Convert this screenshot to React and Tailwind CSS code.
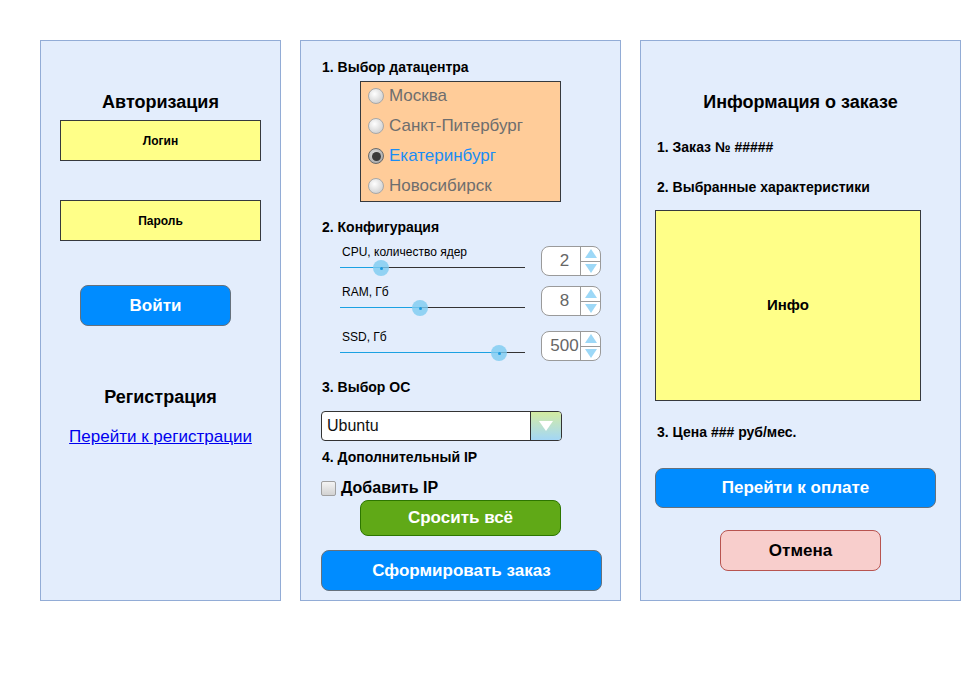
import React from "react";

function Slider({ pos }) {
  return (
    <div className="relative h-[16px] w-[185px]">
      <div className="absolute left-0 right-0 top-[7px] h-px bg-[#333333]" />
      <div className="absolute left-0 top-[7px] h-px bg-[#1ba1e2]" style={{ width: pos }} />
      <div
        className="absolute top-0 flex h-4 w-4 items-center justify-center rounded-full bg-[#7ccbf0]/80"
        style={{ left: pos - 8 }}
      >
        <div className="h-[3px] w-[3px] rounded-full bg-[#1b9ae0]" />
      </div>
    </div>
  );
}

function Spinner({ value }) {
  return (
    <div className="flex h-[30px] w-[60px] overflow-hidden rounded-[8px] border border-[#9a9a9a] bg-white">
      <div className="flex flex-1 items-center justify-center pl-[7px] text-[17px] text-[#666666]">{value}</div>
      <div className="flex w-[20px] flex-col border-l border-[#9a9a9a]">
        <div className="flex flex-1 items-center justify-center border-b border-[#9a9a9a]">
          <svg width="12" height="9" viewBox="0 0 12 9">
            <polygon points="6,0 12,9 0,9" fill="#9dd8f7" />
          </svg>
        </div>
        <div className="flex flex-1 items-center justify-center">
          <svg width="12" height="9" viewBox="0 0 12 9">
            <polygon points="0,0 12,0 6,9" fill="#9dd8f7" />
          </svg>
        </div>
      </div>
    </div>
  );
}

function ConfigRow({ label, pos, value, className }) {
  return (
    <div className={"flex " + className}>
      <div className="ml-[19px] flex w-[185px] flex-col">
        <div className="h-[12px] pl-[2px] text-[12px] leading-[12px] text-black">{label}</div>
        <div className="mt-[2px]">
          <Slider pos={pos} />
        </div>
      </div>
      <div className="ml-[16px]">
        <Spinner value={value} />
      </div>
    </div>
  );
}

function Radio({ label, checked }) {
  return (
    <div className="flex h-[30px] items-center pl-[7px]">
      {checked ? (
        <div className="flex h-[16px] w-[16px] items-center justify-center rounded-full border border-[#6a6a6a] bg-[radial-gradient(circle_at_40%_35%,#e0e0e0,#9a9a9a)]">
          <div className="h-[9px] w-[9px] rounded-full bg-[#3a3a3a]" />
        </div>
      ) : (
        <div className="h-[16px] w-[16px] rounded-full border border-[#a8a8a8] bg-[radial-gradient(circle_at_40%_35%,#ffffff,#c4c4c4)]" />
      )}
      <span className={"ml-[5px] text-[17px] " + (checked ? "text-[#1a8df5]" : "text-[#6e6e6e]")}>{label}</span>
    </div>
  );
}

export default function App() {
  return (
    <div className="flex min-h-[690px] w-[980px] items-start gap-[19px] bg-white pl-[40px] pt-[40px] text-black [font-family:'Liberation_Sans',Arial,sans-serif]">
      {/* Left panel */}
      <div className="flex h-[561px] w-[241px] flex-col items-center border border-[#92acd6] bg-[#e3edfc] pt-[51px]">
        <div className="text-[18px] font-bold leading-[20px]">Авторизация</div>
        <div className="mt-[8px] flex h-[41px] w-[201px] items-center justify-center border border-[#36393d] bg-[#ffff88] text-[12px] font-bold">
          Логин
        </div>
        <div className="mt-[39px] flex h-[41px] w-[201px] items-center justify-center border border-[#36393d] bg-[#ffff88] text-[12px] font-bold">
          Пароль
        </div>
        <div className="ml-[39px] mt-[44px] flex h-[41px] w-[151px] items-center justify-center self-start rounded-[8px] border border-[#66717c] bg-[#008cff] text-[17px] font-bold text-white">
          Войти
        </div>
        <div className="mt-[61px] text-[18px] font-bold leading-[20px]">Регистрация</div>
        <a href="#" className="mt-[21px] text-[17px] leading-[18px] text-[#0000ee] underline">
          Перейти к регистрации
        </a>
      </div>

      {/* Middle panel */}
      <div className="flex h-[561px] w-[321px] flex-col border border-[#92acd6] bg-[#e3edfc] pl-[20px] pt-[18px]">
        <div className="ml-[1px] text-[14px] font-bold leading-[16px]">1. Выбор датацентра</div>
        <div className="ml-[39px] mt-[6px] h-[121px] w-[201px] border border-[#36393d] bg-[#ffcc99]">
          <div className="-mt-[1px] flex flex-col">
            <Radio label="Москва" />
            <Radio label="Санкт-Питербург" />
            <Radio label="Екатеринбург" checked />
            <Radio label="Новосибирск" />
          </div>
        </div>
        <div className="ml-[1px] mt-[17px] text-[14px] font-bold leading-[16px]">2. Конфигурация</div>
        <ConfigRow className="mt-[11px]" label="CPU, количество ядер" pos={41} value="2" />
        <ConfigRow className="mt-[10px]" label="RAM, Гб" pos={80} value="8" />
        <ConfigRow className="mt-[15px]" label="SSD, Гб" pos={159} value="500" />
        <div className="ml-[1px] mt-[18px] text-[14px] font-bold leading-[16px]">3. Выбор ОС</div>
        <div className="mt-[16px] flex h-[30px] w-[241px] overflow-hidden rounded-[4px] border border-[#333333] bg-white">
          <div className="flex flex-1 items-center pl-[5px] text-[16px] text-[#111111]">Ubuntu</div>
          <div className="flex w-[31px] items-center justify-center border-l border-[#333333] bg-linear-to-b from-[#d4eba0] to-[#a3d6f5]">
            <svg width="14" height="10" viewBox="0 0 14 10">
              <polygon points="0,0 14,0 7,10" fill="#ffffff" />
            </svg>
          </div>
        </div>
        <div className="ml-[1px] mt-[8px] text-[14px] font-bold leading-[16px]">4. Дополнительный IP</div>
        <div className="mt-[14px] flex h-[18px] items-center">
          <div className="h-[15px] w-[15px] rounded-[2px] border border-[#a0a0a0] bg-linear-to-b from-[#f4f4f4] to-[#d2d2d2]" />
          <span className="ml-[5px] text-[16px] font-bold leading-[18px]">Добавить IP</span>
        </div>
        <div className="ml-[39px] mt-[3px] flex h-[36px] w-[201px] items-center justify-center rounded-[8px] border border-[#2d7600] bg-[#60a917] text-[17px] font-bold text-white">
          Сросить всё
        </div>
        <div className="mt-[14px] flex h-[41px] w-[281px] items-center justify-center rounded-[8px] border border-[#66717c] bg-[#008cff] text-[17px] font-bold text-white">
          Сформировать заказ
        </div>
      </div>

      {/* Right panel */}
      <div className="flex h-[561px] w-[321px] flex-col border border-[#92acd6] bg-[#e3edfc] pl-[14px] pt-[51px]">
        <div className="-ml-[14px] text-center text-[18px] font-bold leading-[20px]">Информация о заказе</div>
        <div className="ml-[2px] mt-[27px] text-[14px] font-bold leading-[16px]">1. Заказ № #####</div>
        <div className="ml-[2px] mt-[24px] text-[14px] font-bold leading-[16px]">2. Выбранные характеристики</div>
        <div className="mt-[15px] flex h-[191px] w-[266px] items-center justify-center border border-[#36393d] bg-[#ffff88] text-[15px] font-bold">
          Инфо
        </div>
        <div className="ml-[2px] mt-[23px] text-[14px] font-bold leading-[16px]">3. Цена ### руб/мес.</div>
        <div className="mt-[28px] flex h-[40px] w-[281px] items-center justify-center rounded-[8px] border border-[#66717c] bg-[#008cff] text-[17px] font-bold text-white">
          Перейти к оплате
        </div>
        <div className="ml-[65px] mt-[22px] flex h-[41px] w-[161px] items-center justify-center rounded-[8px] border border-[#b85450] bg-[#f8cecc] text-[17px] font-bold">
          Отмена
        </div>
      </div>
    </div>
  );
}
